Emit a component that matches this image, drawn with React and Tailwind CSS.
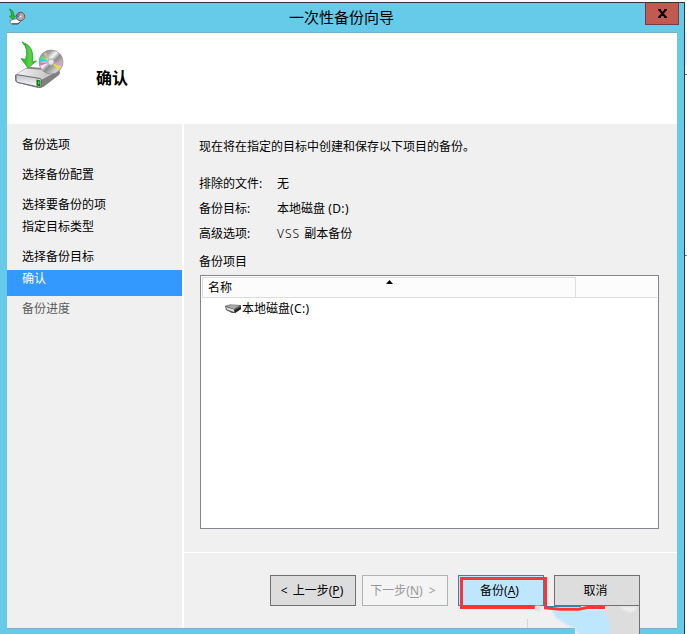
const BackupIcon = ({ className }) => (
  <svg viewBox="0 0 50 50" className={className} aria-hidden="true">
    <defs>
      <linearGradient id="arrow" x1="0" y1="0" x2="1" y2="0">
        <stop offset="0" stopColor="#2aa52a" />
        <stop offset=".6" stopColor="#58d848" />
        <stop offset="1" stopColor="#249c22" />
      </linearGradient>
      <linearGradient id="disc" x1="0" y1="0" x2="1" y2="1">
        <stop offset="0" stopColor="#707070" />
        <stop offset=".28" stopColor="#a8a8a8" />
        <stop offset=".42" stopColor="#f6f6f6" />
        <stop offset=".55" stopColor="#8a8a8a" />
        <stop offset=".8" stopColor="#d6d6d6" />
        <stop offset="1" stopColor="#666" />
      </linearGradient>
      <linearGradient id="drive" x1="0" y1="0" x2="1" y2="0">
        <stop offset="0" stopColor="#f4f4f4" />
        <stop offset="1" stopColor="#b8b8b8" />
      </linearGradient>
      <linearGradient id="front" x1="0" y1="0" x2="0" y2="1">
        <stop offset="0" stopColor="#c0c2ca" />
        <stop offset="1" stopColor="#fff" />
      </linearGradient>
    </defs>
    <path d="M1 34 L11 27.500 Q13 26 16 26 L43 28 Q46 29 46 32 L45 34 L30 45.500 Q27 47.500 24 47 L4 42 Q1 41 1 38Z" fill="#808080" />
    <path d="M2 33.500 L12 27.500 L44 30 L28 38.500Z" fill="url(#drive)" />
    <path d="M2 34.500 Q2 33.500 4 33.800 L26 37.500 Q27.500 38 27.500 40 V44 Q27.500 46.500 25 46 L4 41.500 Q2 41 2 39Z" fill="url(#front)" stroke="#6b6b6b" strokeWidth="1" />
    <path d="M22.500 38.500 L26.500 39.500 V45.500 L22.500 44.500Z" fill="#126d18" />
    <path d="M24 40 L25.500 40.500 V43.500 L24 43Z" fill="#42df40" />
    <circle cx="37" cy="21" r="12" fill="url(#disc)" stroke="#8a8a8a" strokeWidth=".7" />
    <path d="M37 21 L29 13 L32 11Z" fill="#d8b29b" />
    <path d="M37 21 L25 20 L26 16.500Z" fill="#16dfe0" />
    <path d="M37 21 L26 17 L28 14.500Z" fill="#75e85a" opacity=".7" />
    <path d="M37 21 L26.500 24.500 L25.500 22Z" fill="#e66dcb" />
    <path d="M37 21 L46.500 26 L44 29Z" fill="#e7e035" />
    <path d="M37 21 L48 22 L47.500 25Z" fill="#e893ce" />
    <circle cx="37" cy="21" r="3.2" fill="#e5e5e5" stroke="#aaa" />
    <path d="M8 1 Q21 5 18.500 20.500 L22.500 20 L14 27 L7 17.500 L11.500 18.500 Q15 8 8 1Z" fill="url(#arrow)" stroke="#259a28" strokeWidth=".7" />
  </svg>
);

const TitleIcon = ({ className }) => (
  <svg viewBox="0 0 18 18" className={className} aria-hidden="true">
    <path d="M2.500 12.500 L6 11 H12.500 V13.500 L10 16 H3.500 L2 14.500Z" fill="#fff" stroke="#666" strokeWidth=".8" />
    <path d="M4 15.800 H10 L12.500 13.500" fill="none" stroke="#444" />
    <circle cx="12.500" cy="8.500" r="4.2" fill="#b0a5ae" stroke="#65545c" />
    <path d="M12.500 8.500 L9 6.500 L11 4.800Z" fill="#b65d3d" />
    <path d="M12.500 8.500 L8.500 9.500 L9 7Z" fill="#287fd0" />
    <path d="M12.500 8.500 L15.500 11 L16.500 9Z" fill="#d59b65" />
    <circle cx="12.500" cy="8.500" r="1.1" fill="#eee" />
    <path d="M1.500 1 Q6 2.500 5.800 8 H7.500 L5 11.500 L1.500 8.200 H3.500 Q4 4 1.500 1Z" fill="#35bd2f" stroke="#168d22" strokeWidth=".8" />
  </svg>
);

const steps = [
  { label: "备份选项", height: "h-[30px]" },
  { label: "选择备份配置", height: "h-[30px]" },
  { label: "选择要备份的项", height: "h-[22px]" },
  { label: "指定目标类型", height: "h-[30px]" },
  { label: "选择备份目标", height: "h-[22px]" },
];

const details = [
  ["排除的文件:", "无"],
  ["备份目标:", <>本地磁盘 <span className="tracking-[0.4px]">(D:)</span></>],
  ["高级选项:", <><span className="mr-px font-light tracking-[1px]">VSS</span> 副本备份</>],
];

function Sidebar() {
  return (
    <nav className="w-[175px] shrink-0 bg-[#f0f0f0] pt-[10px]">
      {steps.map(({ label, height }) => (
        <div key={label} className={`pl-[15px] leading-[22px] ${height}`}>{label}</div>
      ))}
      <div className="mt-[2px] h-[26px] bg-[#3399ff] pl-[15px] leading-[18px] text-white">确认</div>
      <div className="pl-[15px] leading-[25px] text-[#5c5c5c]">备份进度</div>
    </nav>
  );
}

function ItemList() {
  return (
    <div className="mt-[2px] ml-4 h-[254px] w-[459px] border border-[#828790] bg-white p-px">
      <div className="flex h-[21px] border-b border-[#dedede] bg-[#fcfcfc]">
        <div className="relative w-[374px] border-t border-r border-l border-[#dedede] pl-[5px] leading-[20px]">
          名称
          <svg viewBox="0 0 7 4" className="absolute top-[2px] left-[183px] h-1 w-[7px]" aria-hidden="true">
            <path d="M3.5 0 L7 4 H0Z" fill="#000" />
          </svg>
        </div>
      </div>
      <div className="flex h-[22px] items-center pl-[23px]">
        <svg viewBox="0 0 17 10" className="h-[10px] w-[17px]" aria-hidden="true">
          <path d="M0 2 L5 .5 L16 1 L16 5 L10 9 L7 9 L1 6Z" fill="#555" />
          <path d="M1 2 L6 1 L15 1.500 L9 5Z" fill="#aaa" />
          <path d="M1 3 L9 5.500 V8 L2 5.500Z" fill="#ddd" />
          <path d="M10 6 L16 3 V5 L10 9Z" fill="#222" />
        </svg>
        本地磁盘<span className="tracking-[0.4px]">(C:)</span>
      </div>
    </div>
  );
}

function Button({ children, className }) {
  return <button className={`h-[31px] w-[86px] shrink-0 border text-center leading-[29px] whitespace-pre ${className}`}>{children}</button>;
}

const Key = ({ k }) => <>(<span className="underline underline-offset-2">{k}</span>)</>;

function Footer() {
  return (
    <div className="flex h-[76px] border-t border-white pt-[22px] pl-[86px]">
      <Button className="border-[#707070] bg-[#dddddd] pr-[2px]"><span className="mr-[2px]">&lt;</span> 上一步<Key k="P" /></Button>
      <Button className="ml-[6px] border-[#adb2b5] bg-[#f4f4f4] pr-[4px] text-[#999]">下一步<Key k="N" /> <span className="ml-[3px]">&gt;</span></Button>
      <Button className="ml-[10px] border-[#3c7fb1] bg-[#bee6fd] pr-[3px]">备份<Key k="A" /></Button>
      <Button className="ml-[10px] border-[#707070] bg-[#dddddd] pr-[3px]">取消</Button>
    </div>
  );
}

function Markings() {
  return (
    <svg viewBox="0 0 230 64" className="absolute top-[570px] left-[457px] h-16 w-[230px]" aria-hidden="true">
      <defs><filter id="soft"><feGaussianBlur stdDeviation=".8" /></filter></defs>
      <path d="M118 58 H182 V64 H118Z" fill="#f0f0f0" />
      <path d="M95 40 H160 V66 H122 L118 58 Q111 56 106 52 Q96 47 95 40Z" fill="#bee6fd" filter="url(#soft)" />
      <path d="M149 36 H182 V64 H153 Q153 48 147 41Z" fill="#ddd" />
      <path d="M163 37 H180 Q178 43 172 42 Q166 40 163 37Z" fill="#f0f0f0" filter="url(#soft)" />
      <path d="M97 35.500 H183" stroke="#707070" />
      <path d="M182.500 35 V64" stroke="#707070" />
      <path d="M70.500 49 V58" stroke="#d6d6d6" />
      <path d="M89 36.500 H124" stroke="#3c7fb1" />
      <path d="M78 37.500 H4.500 V8.500 H88.500 V38 L103 39.300 H122 L130 37.500 H148" fill="none" stroke="#ff3535" strokeWidth="3" />
      <circle cx="81" cy="38" r="3" fill="#ddd" filter="url(#soft)" />
    </svg>
  );
}

export default function App() {
  return (
    <main className="relative h-[634px] w-[687px] overflow-hidden bg-white pt-[2px] font-['Noto_Sans','Noto_Sans_CJK_SC',sans-serif] text-[12px] text-black">
      <div className="h-[632px] w-[685px] border-t border-r border-[#333438] bg-[#66cae9]">
        <header className="flex h-[29px]">
          <TitleIcon className="mt-[5px] ml-[8px] h-[18px] w-[18px]" />
          <h1 className="ml-[23px] w-[585px] text-center text-[15px] leading-[28px] font-normal">一次性备份向导</h1>
          <button className="ml-[11px] flex h-[22px] w-[34px] shrink-0 items-center justify-center border border-t-0 border-[#6d3e43] bg-[#c35a50]" aria-label="Close">
            <svg viewBox="0 0 9 9" className="h-[9px] w-[9px]" aria-hidden="true"><path d="M0 .5 H3 M6 .5 H9 M0 8.500 H3 M6 8.500 H9 M1.500 1 L7.500 8 M7.500 1 L1.500 8" stroke="#000" strokeWidth="2" /></svg>
          </button>
        </header>
        <section className="ml-[7px] h-[597px] w-[670px] border-t border-b border-[#7eaec7] bg-white">
          <div className="flex h-[91px]">
            <BackupIcon className="mt-[8px] ml-[7px] h-[50px] w-[50px]" />
            <h2 className="mt-[32px] ml-[32px] text-[16px] leading-[26px] font-bold">确认</h2>
          </div>
          <div className="flex h-[504px]">
            <Sidebar />
            <div className="ml-[2px] w-[493px] bg-[#f0f0f0]">
              <div className="h-[428px] pt-[12px]">
                <p className="ml-[15px] leading-[22px]">现在将在指定的目标中创建和保存以下项目的备份。</p>
                <dl className="mt-[13px] ml-[15px]">
                  {details.map(([name, value]) => (
                    <div key={name} className="flex h-[25px] leading-[25px]"><dt className="w-[78px]">{name}</dt><dd>{value}</dd></div>
                  ))}
                </dl>
                <h3 className="mt-[5px] ml-[15px] leading-[22px]">备份项目</h3>
                <ItemList />
              </div>
              <Footer />
            </div>
          </div>
        </section>
      </div>
      <Markings />
      <div className="absolute top-[32px] right-0 h-[34px] w-[2px] bg-[#f0f0f0]" />
      <div className="absolute top-[74px] right-0 h-px w-[2px] bg-[#777]" />
      <div className="absolute top-[255px] right-0 h-px w-[2px] bg-[#777]" />
    </main>
  );
}
